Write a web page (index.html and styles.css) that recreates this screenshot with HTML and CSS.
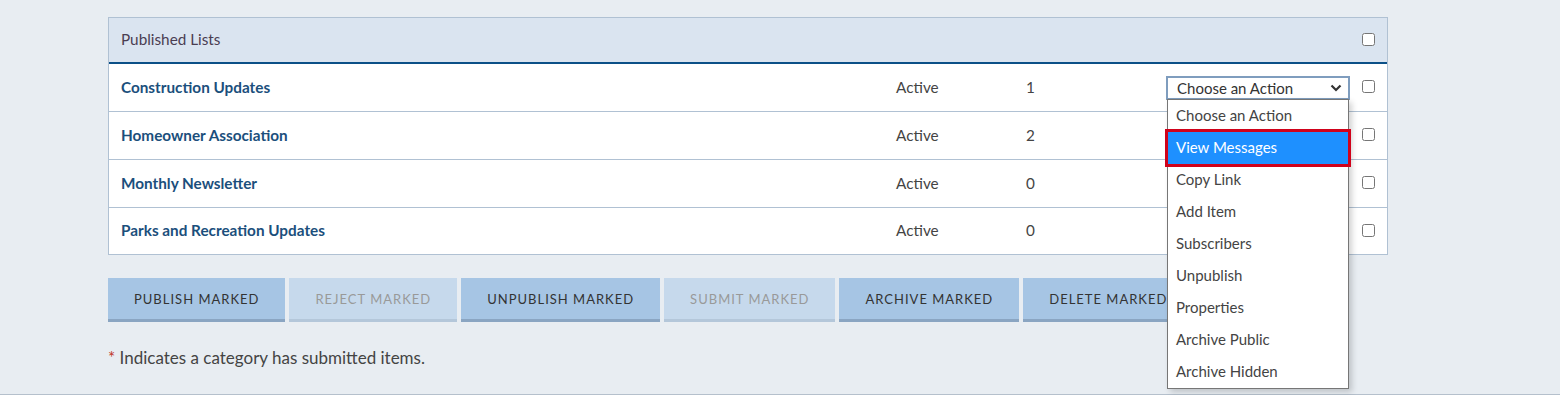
FILE: index.html
```html
<!DOCTYPE html>
<html lang="en">

<head>
    <meta charset="UTF-8">
    <meta name="viewport" content="width=device-width, initial-scale=1.0">
    <title>Published Lists</title>
    <link rel="stylesheet" href="styles.css">
</head>

<body>
    <div class="page">
        <div class="panel">
            <div class="panel-header">
                <span>Published Lists</span>
                <input type="checkbox" class="check">
            </div>
            <div class="row">
                <a class="list-name">Construction Updates</a>
                <span class="status">Active</span>
                <span class="count">1</span>
                <div class="action-select">
                    <div class="select-box">
                        <span>Choose an Action</span>
                        <svg width="12" height="8" viewBox="0 0 12 8"><path d="M1.5 1.5 L6 6 L10.5 1.5" fill="none" stroke="#333" stroke-width="2.2"/></svg>
                    </div>
                    <ul class="dropdown">
                        <li>Choose an Action</li>
                        <li class="selected">View Messages</li>
                        <li>Copy Link</li>
                        <li>Add Item</li>
                        <li>Subscribers</li>
                        <li>Unpublish</li>
                        <li>Properties</li>
                        <li>Archive Public</li>
                        <li>Archive Hidden</li>
                    </ul>
                </div>
                <input type="checkbox" class="check">
            </div>
            <div class="row">
                <a class="list-name">Homeowner Association</a>
                <span class="status">Active</span>
                <span class="count">2</span>
                <div class="action-select"></div>
                <input type="checkbox" class="check">
            </div>
            <div class="row">
                <a class="list-name">Monthly Newsletter</a>
                <span class="status">Active</span>
                <span class="count">0</span>
                <div class="action-select"></div>
                <input type="checkbox" class="check">
            </div>
            <div class="row">
                <a class="list-name">Parks and Recreation Updates</a>
                <span class="status">Active</span>
                <span class="count">0</span>
                <div class="action-select"></div>
                <input type="checkbox" class="check">
            </div>
        </div>

        <div class="buttons">
            <button class="btn">Publish Marked</button>
            <button class="btn disabled">Reject Marked</button>
            <button class="btn">Unpublish Marked</button>
            <button class="btn disabled">Submit Marked</button>
            <button class="btn">Archive Marked</button>
            <button class="btn">Delete Marked</button>
        </div>

        <p class="note"><span class="star">*</span> Indicates a category has submitted items.</p>
    </div>
</body>

</html>
```

FILE: styles.css
```css
body {
    font-family: 'Lato', sans-serif;
    margin: 0;
    padding: 0;
    background-color: #FFF;
    color: #444;
}

.page {
    background-color: #E8EDF2;
    height: 377px;
    padding: 17px 0 0 108px;
    border-bottom: 1px solid #B5C0CC;
}

.panel {
    width: 1278px;
    border: 1px solid #B0C1D3;
    background-color: #FFF;
}

.panel-header {
    background-color: #DAE4F0;
    height: 42px;
    padding: 0 12px 2px;
    border-bottom: 2px solid #0B5087;
    display: flex;
    align-items: center;
    justify-content: space-between;
    font-size: 15.3px;
    color: #4A3D52;
}

.row {
    display: grid;
    grid-template-columns: 775px 130px 140px 184px 13px;
    align-items: center;
    height: 45px;
    padding: 0 0 2px 12px;
    border-bottom: 1px solid #B0C1D3;
    font-size: 15.3px;
}

.row:last-child {
    border-bottom: none;
    height: 44px;
}

.row .check {
    margin-left: 12px;
}

.list-name {
    font-weight: bold;
    color: #1B4F7C;
    cursor: pointer;
}

.status,
.count {
    color: #444;
}

.check {
    width: 13px;
    height: 13px;
    margin: 0;
}

.action-select {
    position: relative;
    height: 24px;
    margin-top: 2px;
}

.select-box {
    height: 20px;
    border: 2px solid #7F9DBE;
    display: flex;
    align-items: center;
    justify-content: space-between;
    padding: 0 6px 0 9px;
    font-size: 15px;
    color: #333;
    background-color: #FFF;
}

.dropdown {
    position: absolute;
    top: 23px;
    left: 1px;
    width: 180px;
    margin: 0;
    padding: 0;
    list-style: none;
    background-color: #FFF;
    border: 1px solid #767676;
    box-shadow: 3px 3px 6px rgba(0, 0, 0, 0.18);
    z-index: 10;
}

.dropdown li {
    height: 32px;
    line-height: 31px;
    padding-left: 8px;
    font-size: 15px;
    color: #444;
}

.dropdown li.selected {
    background-color: #1E90FF;
    color: #FFF;
    outline: 3px solid #D0021B;
    position: relative;
}

.buttons {
    display: flex;
    gap: 4px;
    margin-top: 23px;
}

.btn {
    font-family: 'Lato', sans-serif;
    font-size: 13px;
    letter-spacing: 1px;
    text-transform: uppercase;
    color: #333;
    background-color: #A6C5E4;
    border: none;
    border-bottom: 3px solid #8AA5C2;
    height: 44px;
    padding: 0 26px;
    cursor: pointer;
}

.btn.disabled {
    background-color: #C6D9EC;
    border-bottom-color: #B4C7DA;
    color: #999;
}

.note {
    margin: 25px 0 0;
    font-size: 17px;
    color: #444;
}

.star {
    color: #C0392B;
}
```
